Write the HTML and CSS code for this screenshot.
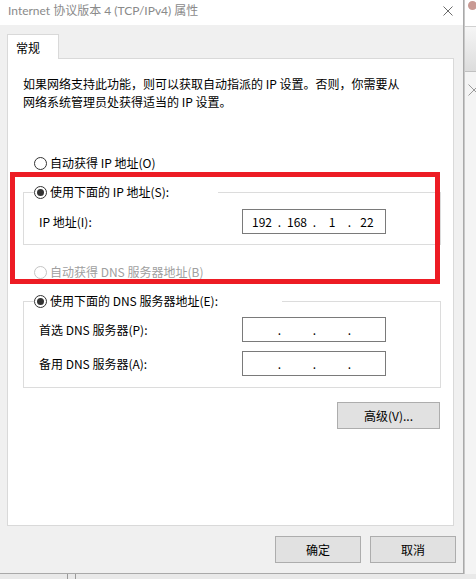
FILE: index.html
```html
<!DOCTYPE html>
<html>
<head>
    <title>Internet 协议版本 4 (TCP/IPv4) 属性</title>
    <link rel="stylesheet" href="styles.css">
</head>
<body>
    <div class="screen">
        <div class="dialog">
            <div class="title-bar">
                <span class="title">Internet 协议版本 4 (TCP/IPv4) 属性</span>
                <svg class="close" width="10" height="10" viewBox="0 0 10 10">
                    <path d="M0.5 0.5 L9.5 9.5 M9.5 0.5 L0.5 9.5" stroke="#6b6b6b" stroke-width="1" fill="none"/>
                </svg>
            </div>
            <div class="dialog-body">
                <div class="tabs">
                    <div class="tab">常规</div>
                </div>
                <div class="panel">
                    <p class="intro">如果网络支持此功能，则可以获取自动指派的 IP 设置。否则，你需要从<br>网络系统管理员处获得适当的 IP 设置。</p>

                    <div class="radio-row first-radio">
                        <span class="radio"></span>
                        <span>自动获得 IP 地址(O)</span>
                    </div>

                    <div class="group group-ip">
                        <div class="legend legend-ip">
                            <span class="radio checked"></span>
                            <span>使用下面的 IP 地址(S):</span>
                        </div>
                        <div class="field-row">
                            <span class="field-label">IP 地址(I):</span>
                            <div class="ip-box">
                                <span class="octet">192</span><span class="dot">.</span>
                                <span class="octet">168</span><span class="dot">.</span>
                                <span class="octet">1</span><span class="dot">.</span>
                                <span class="octet">22</span>
                            </div>
                        </div>
                    </div>

                    <div class="radio-row disabled dns-auto">
                        <span class="radio"></span>
                        <span>自动获得 DNS 服务器地址(B)</span>
                    </div>

                    <div class="group group-dns">
                        <div class="legend legend-dns">
                            <span class="radio checked"></span>
                            <span>使用下面的 DNS 服务器地址(E):</span>
                        </div>
                        <div class="field-row">
                            <span class="field-label">首选 DNS 服务器(P):</span>
                            <div class="ip-box">
                                <span class="octet"></span><span class="dot">.</span>
                                <span class="octet"></span><span class="dot">.</span>
                                <span class="octet"></span><span class="dot">.</span>
                                <span class="octet"></span>
                            </div>
                        </div>
                        <div class="field-row second-row">
                            <span class="field-label">备用 DNS 服务器(A):</span>
                            <div class="ip-box">
                                <span class="octet"></span><span class="dot">.</span>
                                <span class="octet"></span><span class="dot">.</span>
                                <span class="octet"></span><span class="dot">.</span>
                                <span class="octet"></span>
                            </div>
                        </div>
                    </div>

                    <div class="advanced-row">
                        <button class="btn advanced">高级(V)...</button>
                    </div>

                    <!-- red annotation drawn over the static IP section -->
                    <div class="highlight"></div>
                </div>
                <div class="button-row">
                    <button class="btn">确定</button>
                    <button class="btn">取消</button>
                </div>
            </div>
        </div>
        <div class="backdrop">
            <div class="backdrop-top"><span class="avatar"></span></div>
            <div class="backdrop-bar"></div>
            <svg class="backdrop-close" width="12" height="12" viewBox="0 0 12 12">
                <path d="M0.5 0.5 L11.5 11.5 M11.5 0.5 L0.5 11.5" stroke="#9a9a9a" stroke-width="1" fill="none"/>
            </svg>
        </div>
    </div>
    <div class="bottom-strip">
        <span class="strip-line"></span>
        <span class="strip-line"></span>
    </div>
</body>
</html>
```

FILE: styles.css
```css
* {
    box-sizing: border-box;
}

body {
    margin: 0;
    background-color: #e9e9e9;
    font-family: "Noto Sans CJK SC", "Microsoft YaHei", sans-serif;
    font-size: 12px;
    line-height: 18px;
    color: #000;
}

.screen {
    display: flex;
    height: 574px;
}

.dialog {
    width: 464px;
    height: 574px;
    background-color: #f0f0f0;
    border-right: 1px solid #a9a9a9;
    border-bottom: 1px solid #a9a9a9;
    display: flex;
    flex-direction: column;
}

.title-bar {
    height: 25px;
    background-color: #fff;
    display: flex;
    align-items: center;
    justify-content: space-between;
    padding: 0 10px 4px 8px;
}

.title {
    color: #8a8a8a;
    font-family: Lato, "Noto Sans CJK SC", sans-serif;
    font-size: 12px;
}

.dialog-body {
    padding: 9px 7px 0 7px;
}

/* Tab strip */
.tabs {
    display: flex;
    height: 25px;
}

.tab {
    width: 52px;
    height: 25px;
    background-color: #fff;
    border: 1px solid #d9d9d9;
    border-bottom: none;
    padding: 4px 0 0 8px;
    position: relative;
    z-index: 1;
}

.panel {
    position: relative;
    width: 447px;
    height: 468px;
    margin-top: -1px;
    background-color: #fff;
    border: 1px solid #d9d9d9;
    padding: 16px 0 0 0;
}

.intro {
    margin: 0 0 0 15px;
}

/* Radio buttons */
.radio-row,
.legend {
    display: flex;
    align-items: center;
    height: 18px;
}

.radio-row {
    margin-left: 26px;
}

.first-radio {
    margin-top: 43px;
}

.radio {
    width: 13px;
    height: 13px;
    border: 1px solid #333;
    border-radius: 50%;
    background-color: #fff;
    margin-right: 3px;
    display: flex;
    align-items: center;
    justify-content: center;
}

.radio.checked::after {
    content: "";
    width: 7px;
    height: 7px;
    border-radius: 50%;
    background-color: #333;
}

.disabled {
    color: #a0a0a0;
}

.disabled .radio {
    border-color: #c4c4c4;
}

.dns-auto {
    margin-top: 18px;
}

/* Group boxes */
.group {
    width: 418px;
    margin-left: 15px;
    border: 1px solid #dcdcdc;
}

.group-ip {
    margin-top: 20px;
    padding-bottom: 10px;
}

.group-dns {
    margin-top: 20px;
    padding-bottom: 11px;
}

.legend {
    margin: -10px 0 0 10px;
    background-color: #fff;
}

.legend-ip {
    width: 184px;
}

.legend-dns {
    width: 248px;
}

.field-row {
    display: flex;
    align-items: center;
    margin-top: 8px;
    padding-left: 15px;
}

.group-dns .field-row {
    margin-top: 7px;
}

.group-dns .second-row {
    margin-top: 9px;
}

.field-label {
    width: 203px;
}

.ip-box {
    width: 144px;
    height: 25px;
    border: 1px solid #7a7a7a;
    display: flex;
    align-items: center;
    padding-left: 4px;
}

.octet {
    width: 30px;
    text-align: center;
}

.dot {
    width: 5px;
    text-align: center;
}

/* Buttons */
.btn {
    width: 86px;
    height: 27px;
    background-color: #e1e1e1;
    border: 1px solid #adadad;
    font-family: inherit;
    font-size: 12px;
    color: #000;
    padding: 0;
}

.advanced-row {
    display: flex;
    justify-content: flex-end;
    margin: 14px 13px 0 0;
}

.btn.advanced {
    width: 103px;
}

.button-row {
    display: flex;
    justify-content: flex-end;
    gap: 9px;
    margin-top: 10px;
}

.highlight {
    position: absolute;
    left: 2px;
    top: 113px;
    width: 430px;
    height: 112px;
    border: 5px solid #ed1c24;
}

/* Window peeking out behind the dialog */
.backdrop {
    flex: 1;
    background-color: #f4f4f4;
    border-left: 1px solid #c8c8c8;
    overflow: hidden;
}

.backdrop-top {
    height: 26px;
    background-color: #fff;
    position: relative;
}

.avatar {
    position: absolute;
    left: 3px;
    top: 1px;
    width: 9px;
    height: 9px;
    border-radius: 50%;
    background-color: #c99a94;
}

.backdrop-bar {
    height: 46px;
    background: linear-gradient(#f6f6f6, #dcdcdc);
    border-top: 1px solid #d0d0d0;
    border-bottom: 1px solid #c0c0c0;
}

.backdrop-close {
    display: block;
    margin: 12px 0 0 3px;
}

.bottom-strip {
    height: 5px;
    display: flex;
    gap: 7px;
    padding-left: 67px;
}

.strip-line {
    width: 1px;
    height: 5px;
    background-color: #9a9a9a;
}
```
